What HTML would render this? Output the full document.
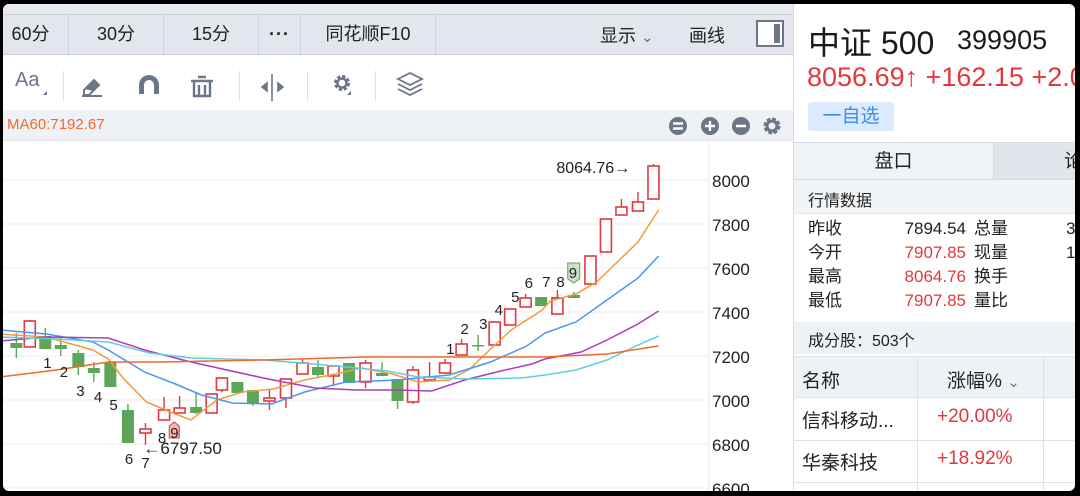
<!DOCTYPE html>
<html><head><meta charset="utf-8">
<style>
*{margin:0;padding:0;box-sizing:border-box}
body{width:1080px;height:496px;background:#000;overflow:hidden;font-family:"Liberation Sans","Noto Sans CJK SC",sans-serif;position:relative}
#win{position:absolute;left:3px;top:4px;width:1072px;height:487px;background:#fff;border-radius:6px;overflow:hidden}
.abs{position:absolute}
.topband{left:0;top:0;width:790px;height:11px;background:#e8ebef}
.tabs{left:0;top:10px;width:790px;height:41px;background:#e3e7ed;border-top:1px solid #ccd2da;border-bottom:1px solid #ccd2da}
.tab{position:absolute;top:0;height:39px;line-height:39px;text-align:center;font-size:18px;color:#222;border-right:1px solid #ccd2da}
.sep{position:absolute;top:67px;width:1px;height:30px;background:#dde1e6}
.mabar{left:0;top:106px;width:790px;height:31px;background:#eef2f7;border-bottom:2px solid #e6e8eb}
.rp{left:790px;top:0;width:282px;height:487px;border-left:1px solid #d6dbe2}
.t{position:absolute;white-space:nowrap}
.red{color:#e0383e}
</style></head><body>
<div id="win">
<div class="abs topband"></div>
<div class="abs tabs">
 <div class="tab" style="left:-10px;width:76px">60分</div>
 <div class="tab" style="left:66px;width:95px">30分</div>
 <div class="tab" style="left:161px;width:95px">15分</div>
 <div class="tab" style="left:256px;width:42px;font-weight:bold;letter-spacing:1px">···</div>
 <div class="tab" style="left:298px;width:135px">同花顺F10</div>
 <div class="t" style="left:597px;top:7px;font-size:18px;color:#222">显示 <span style="color:#6b7689;font-size:15px">&#8964;</span></div>
 <div class="t" style="left:686px;top:7px;font-size:18px;color:#222">画线</div>
 <div class="t" style="left:753px;top:5px;width:28px;height:27px;border:2px solid #6b7689;background:#fff"><div style="position:absolute;right:2px;top:2px;width:6px;height:19px;background:#6b7689"></div></div>
</div>
<div class="t" style="left:12px;top:65px;font-size:20px;color:#6b7689">Aa</div>
<svg class="abs" style="left:0;top:50px" width="500" height="50" viewBox="0 0 500 50">
 <g fill="#6b7689" stroke="#6b7689">
 <path d="M40 41l4-4v4z" stroke="none"/>
 <path d="M81 36l10-10 5 5-10 10h-5z M79 42h20" stroke-width="2" fill="none"/>
 <path d="M82 35l9-9 5 5-6 6z" stroke="none"/>
 <path d="M136 40v-9a10 10 0 0 1 20 0v9h-5v-9a5 5 0 0 0-10 0v9z" stroke="none"/>
 <path d="M188 27h22M195 23h8M191 27v15h16v-15M196 31v10M202 31v10" stroke-width="2.4" fill="none"/>
 <path d="M264 29l-5 4 5 4zM275 29l5 4-5 4zM269 20v27" stroke-width="1.6"/>
 <path d="M259 33h5M275 33h5" stroke-width="2"/>
 <circle cx="339" cy="29" r="6" fill="none" stroke-width="4" stroke-dasharray="3 1.7"/>
 <circle cx="339" cy="29" r="4.5" fill="none" stroke-width="2.4"/>
 <path d="M344 41l4-4v4z" stroke="none"/>
 <path d="M395 25l12-6 12 6-12 6z M395 30l12 6 12-6 M395 35l12 6 12-6" fill="none" stroke-width="1.8"/>
 </g>
</svg>
<div class="sep" style="left:60px"></div><div class="sep" style="left:236px"></div><div class="sep" style="left:304px"></div><div class="sep" style="left:372px"></div>
<div class="abs mabar"></div>
<div class="t" style="left:4px;top:112px;font-size:15px;color:#f06a2a">MA60:7192.67</div>
<svg class="abs" style="left:660px;top:110px" width="130" height="24">
 <g fill="#6b7689"><circle cx="15" cy="12" r="9"/><circle cx="47" cy="12" r="9"/><circle cx="78" cy="12" r="9"/></g>
 <g stroke="#fff" stroke-width="2.4"><path d="M10 9.5h10M10 14.5h10M42 12h10M47 7v10M73 12h10"/></g>
 <circle cx="109" cy="12" r="6" fill="none" stroke="#6b7689" stroke-width="5" stroke-dasharray="3.2 1.5"/>
 <circle cx="109" cy="12" r="5" fill="none" stroke="#6b7689" stroke-width="3"/>
</svg>
<svg id="ch" class="abs" style="left:0;top:0" width="790" height="487"></svg>
<div class="abs rp">
 <div class="t" style="left:14px;top:14px;font-size:32px;color:#1a1a1a">中证 500</div>
 <div class="t" style="left:163px;top:21px;font-size:27px;color:#1a1a1a">399905</div>
 <div class="t red" style="left:13px;top:58px;font-size:27px">8056.69↑ +162.15 +2.05%</div>
 <div class="t" style="left:14px;top:98px;width:86px;height:29px;background:#dbeafc;border-radius:3px;color:#3a8ef5;font-size:19px;line-height:29px;text-align:center">一自选</div>
 <div class="t" style="left:0;top:138px;width:200px;height:38px;background:#eff2f6;border-top:1px solid #d6dbe2;border-bottom:1px solid #d6dbe2;border-right:1px solid #d6dbe2;text-align:center;line-height:37px;font-size:19px;color:#222">盘口</div>
 <div class="t" style="left:200px;top:138px;width:90px;height:38px;background:#e1e5eb;border-top:1px solid #d6dbe2;border-bottom:1px solid #d6dbe2;line-height:37px;font-size:19px;color:#222;padding-left:70px">论</div>
 <div class="t" style="left:0;top:176px;width:290px;height:34px;background:#f1f4f7;border-bottom:1px solid #e4e7eb"></div>
 <div class="t" style="left:14px;top:183px;font-size:16px;color:#222">行情数据</div>
 <div class="t" style="left:14px;top:213px;font-size:17px;color:#222;line-height:24px">昨收<br>今开<br>最高<br>最低</div>
 <div class="t" style="left:92px;top:213px;font-size:17px;line-height:24px;text-align:right;width:80px"><span style="color:#222">7894.54</span><br><span class="red">7907.85</span><br><span class="red">8064.76</span><br><span class="red">7907.85</span></div>
 <div class="t" style="left:180px;top:213px;font-size:17px;color:#222;line-height:24px">总量<br>现量<br>换手<br>量比</div>
 <div class="t" style="left:272px;top:213px;font-size:17px;color:#222;line-height:24px">3<br>12</div>
 <div class="t" style="left:0;top:318px;width:290px;height:32px;background:#eef2f6"></div>
 <div class="t" style="left:14px;top:323px;font-size:16px;color:#222">成分股：503个</div>
 <div class="t" style="left:0;top:352px;width:290px;height:42px;background:#eef2f6;border-top:1px solid #dfe3e8;border-bottom:1px solid #dfe3e8"></div>
 <div class="t" style="left:123px;top:352px;width:1px;height:135px;background:#dfe3e8"></div>
 <div class="t" style="left:249px;top:352px;width:1px;height:135px;background:#dfe3e8"></div>
 <div class="t" style="left:0;top:436px;width:290px;height:1px;background:#dfe3e8"></div>
 <div class="t" style="left:0;top:478px;width:290px;height:1px;background:#dfe3e8"></div>
 <div class="t" style="left:8px;top:362px;font-size:19px;color:#222">名称</div>
 <div class="t" style="left:153px;top:362px;font-size:19px;color:#222">涨幅% <span style="color:#6b7689;font-size:15px">&#8964;</span></div>
 <div class="t" style="left:8px;top:402px;font-size:19px;color:#222">信科移动...</div>
 <div class="t red" style="left:143px;top:402px;font-size:19px">+20.00%</div>
 <div class="t" style="left:8px;top:444px;font-size:19px;color:#222">华秦科技</div>
 <div class="t red" style="left:143px;top:444px;font-size:19px">+18.92%</div>
</div>
</div>
<script>
function fx(x){return x<540?x*1.033+2:540+(x-540)*1.033+2;}
var s='',R='#e0383e',G='#5da558';
for(var v=8000;v>=6600;v-=200){var y=176+(8000-v)*0.22;s+='<line x1="0" x2="706" y1="'+y+'" y2="'+y+'" stroke="#eceef1"/>';s+='<text x="709" y="'+(y+7)+'" font-size="17" fill="#222" font-family="Liberation Sans">'+v+'</text>';}
s+='<line x1="706" x2="706" y1="137" y2="487" stroke="#e6e8eb"/>';
var c=[[11,'g',339,344,329,354],[24,'r',317,343,316,343],[39,'g',332,345,324,345],[54,'g',341,345,334,352],[71,'g',349,363,346,371],[86,'g',364,369,358,378],[102,'g',358,383,358,383],[119,'g',406,439,400,439],[136,'r',425,429,419,441],[154,'r',406,416,393,416],[169,'r',404,409,392,409],[185,'g',403,409,388,410],[200,'r',390,409,390,409],[210,'r',374,386,374,388],[225,'g',378,389,378,390],[240,'g',386,399,386,402],[256,'r',394,397,386,406],[272,'r',375,394,375,404],[288,'r',359,370,355,370],[303,'g',363,371,356,374],[318,'r',362,372,362,381],[333,'g',359,379,359,379],[349,'r',359,378,356,384],[365,'g',369,372,358,372],[380,'g',375,397,375,405],[395,'r',366,398,362,400],[411,'r',373,376,358,376],[426,'r',359,369,355,369],[442,'r',340,351,335,351],[458,'g',341,342,331,347],[474,'r',318,341,318,341],[489,'r',305,321,305,321],[504,'r',294,303,290,303],[519,'g',293,302,293,302],[535,'g',293,297,290,300],[552,'r',294,310,286,310],[568,'g',291,294,288,294],[584,'r',252,280,252,280],[599,'r',215,248,215,248],[614,'r',203,211,195,211],[630,'r',198,207,188,207],[645,'r',162,195,160,195]];
c.forEach(function(k){var x=fx(k[0]),col=k[1]=='r'?R:G;s+='<line x1="'+x+'" x2="'+x+'" y1="'+k[4]+'" y2="'+k[5]+'" stroke="'+col+'" stroke-width="1.4"/>';var h=Math.max(k[3]-k[2],1.5);if(k[1]=='r')s+='<rect x="'+(x-5.5)+'" y="'+k[2]+'" width="11" height="'+h+'" fill="#fff" stroke="'+R+'" stroke-width="1.6"/>';else s+='<rect x="'+(x-6)+'" y="'+k[2]+'" width="12" height="'+h+'" fill="'+G+'"/>';});
function pl(p,col){p=p.split(' ').map(function(q){var a=q.split(',');return fx(+a[0])+','+a[1];}).join(' ');s+='<polyline fill="none" stroke="'+col+'" stroke-width="1.5" points="'+p+'"/>';}
pl('-5,330 40,333 85,346 100,355 115,375 137,398 160,408 180,416 205,396 230,388 260,385 290,376 320,370 345,364 375,370 400,378 430,376 450,365 470,345 490,326 520,306 545,297 570,290 590,278 610,258 630,238 650,206','#f39a3e');
pl('-5,326 40,330 85,338 100,346 135,368 165,380 190,391 220,399 258,400 290,388 330,378 380,376 430,371 470,358 505,342 540,329 570,318 600,296 630,274 650,252','#4d95f2');
pl('-5,337 40,333 100,334 135,346 180,358 250,374 300,384 340,386 380,386 413,387 445,376 480,367 510,360 540,355 575,348 600,336 630,320 650,307','#a93fb5');
pl('-5,333 50,335 100,338 140,349 180,354 250,356 300,360 370,367 400,373 450,375 500,374 540,371 570,366 600,356 630,341 650,332','#5fcde0');
pl('-5,373 50,366 100,358 150,358 250,356 350,353 450,353 540,353 600,350 650,342','#f06a2a');
function tx(x,y,t,sz){s+='<text x="'+fx(x)+'" y="'+y+'" font-size="'+(sz||15)+'" fill="#222" font-family="Liberation Sans">'+t+'</text>';}
tx(37,364,'1');tx(53,373,'2');tx(69,392,'3');tx(86,398,'4');tx(101,406,'5');tx(116,460,'6');tx(132,464,'7');tx(148,439,'8');
tx(427,350,'1');tx(441,330,'2');tx(459,325,'3');tx(474,311,'4');tx(490,298,'5');tx(503,284,'6');tx(520,283,'7');tx(551,283,'8');
s+='<path d="M'+fx(159)+' 422l5-4 5 4v12h-10z" fill="#f4b5b5" stroke="'+R+'"/>';tx(160,434,'9');
s+='<path d="M'+fx(562)+' 259h12v16l-6 4-6-4z" fill="#c8e2c6" stroke="'+G+'"/>';tx(563,274,'9');
tx(134,450,'←6797.50',17);tx(551,169,'8064.76→',16);
document.getElementById('ch').innerHTML=s;
</script>
</body></html>
